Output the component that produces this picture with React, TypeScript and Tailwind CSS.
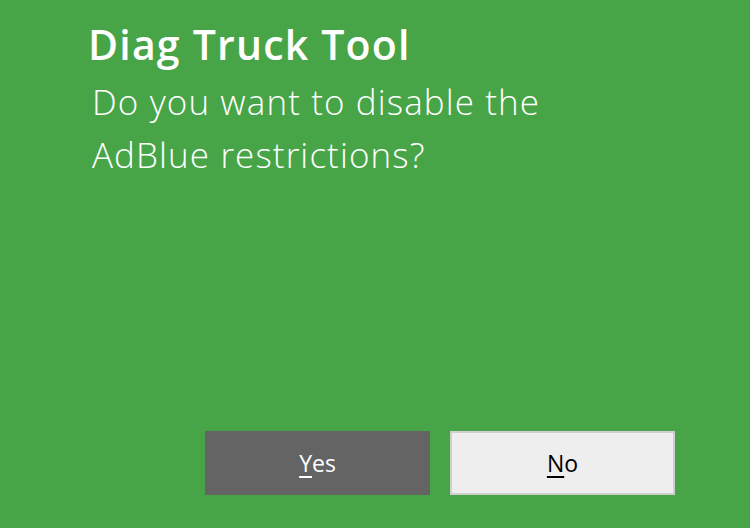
export default function App() {
  return (
    <div
      className="flex h-[528px] w-[750px] flex-col bg-[#47a548] text-white"
      style={{ fontFamily: '"Open Sans", "Noto Sans", sans-serif' }}
    >
      <div className="pl-[88px] pt-[16px]">
        <h1 className="text-[41px] font-semibold leading-[56px] tracking-[1.2px]">Diag Truck Tool</h1>
        <p className="w-[520px] pl-[4px] pt-[3px] text-[35px] font-light leading-[53px] tracking-[1.1px]">
          Do you want to disable the AdBlue restrictions?
        </p>
      </div>
      <div className="mt-auto flex gap-[20px] pb-[33px] pl-[205px]">
        <button className="flex h-[64px] w-[225px] items-center justify-center bg-[#646464] text-[23px] text-white">
          <span><span className="underline underline-offset-4">Y</span>es</span>
        </button>
        <button className="flex h-[64px] w-[225px] items-center justify-center border-2 border-[#cfcfcf] bg-[#eeeeee] text-[23px] text-black">
          <span><span className="underline underline-offset-4">N</span>o</span>
        </button>
      </div>
    </div>
  );
}
